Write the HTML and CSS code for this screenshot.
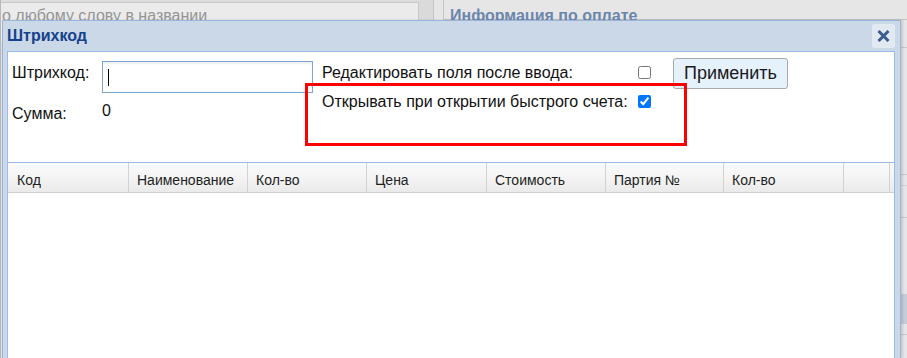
FILE: index.html
```html
<!DOCTYPE html>
<html lang="ru">
<head>
<meta charset="utf-8">
<title>Штрихкод</title>
<link rel="stylesheet" href="styles.css">
</head>
<body>
<div class="page">
  <div class="left-pane">
    <div class="search">о любому слову в названии</div>
  </div>
  <div class="gap"></div>
  <div class="right-pane">
    <h2 class="pay-title">Информация по оплате</h2>
    <div class="bg-row r1"></div>
    <div class="bg-row r2"></div>
    <div class="bg-row r3"></div>
    <div class="bg-row r4"></div>
    <div class="bg-row r5"></div>
    <div class="bg-row band"></div>
    <div class="bg-row r6"></div>
  </div>
</div>

<div class="dialog">
  <div class="dialog-header">
    <span class="dialog-title">Штрихкод</span>
    <button class="close-btn" type="button" aria-label="Закрыть">
      <svg width="13" height="12" viewBox="0 0 13 12"><path d="M1.5 1 L11.5 11 M11.5 1 L1.5 11" stroke="#3c5d8b" stroke-width="3" fill="none"/></svg>
    </button>
  </div>
  <div class="panel">
    <div class="form">
      <div class="fields">
        <label class="lbl first">Штрихкод:</label>
        <div class="input-wrap">
          <input class="barcode" type="text">
          <span class="caret"></span>
        </div>
        <span class="lbl second">Сумма:</span>
        <span class="value">0</span>
      </div>
      <div class="options">
        <span class="opt-lbl">Редактировать поля после ввода:</span>
        <input class="chk" type="checkbox">
        <span class="opt-lbl">Открывать при открытии быстрого счета:</span>
        <input class="chk" type="checkbox" checked>
      </div>
      <button class="apply" type="button">Применить</button>
    </div>
    <div class="grid-head">
      <div class="col c1">Код</div>
      <div class="col c2">Наименование</div>
      <div class="col c3">Кол-во</div>
      <div class="col c4">Цена</div>
      <div class="col c5">Стоимость</div>
      <div class="col c6">Партия №</div>
      <div class="col c7">Кол-во</div>
      <div class="col c8"></div>
      <div class="col-fill"></div>
    </div>
  </div>
</div>

<div class="highlight"></div>
</body>
</html>
```
FILE: styles.css
```css
html, body {
  margin: 0;
  padding: 0;
  width: 907px;
  height: 358px;
  overflow: hidden;
}
body {
  position: relative;
  font-family: "Liberation Sans", Arial, sans-serif;
  background: #e4e4e4;
  color: #111;
}

/* background page */
.page {
  display: flex;
  height: 358px;
}
.left-pane {
  width: 419px;
  background: #dddddd;
  border-left: 1px solid #b8b8b8;
  box-sizing: border-box;
}
.search {
  margin-top: 2px;
  height: 40px;
  box-sizing: border-box;
  border-top: 1px solid #c8c8c8;
  border-right: 1px solid #c8c8c8;
  background: #ebebeb;
  padding: 4px 0 0 1px;
  font-size: 16px;
  color: #959595;
  white-space: nowrap;
}
.gap {
  width: 14px;
  background: #dadada;
  border-right: 1px solid #c4c4c4;
}
.right-pane {
  flex: 1;
  background: #e6e6e6;
  padding-left: 9px;
}
.pay-title {
  margin: 0;
  padding: 13px 0 0 6px;
  height: 6px;
  line-height: 6px;
  font-size: 16px;
  font-weight: bold;
  color: #6b86ad;
  border-left: 1px solid #c4c4c4;
  border-bottom: 1px solid #c4c4c4;
  white-space: nowrap;
}
.bg-row { border-bottom: 1px solid #c9c9c9; }
.r1 { height: 27px; }
.r2 { height: 126px; }
.r3 { height: 10px; border-bottom-color: #d4d4d4; }
.r4 { height: 31px; }
.r5 { height: 76px; border-bottom: none; }
.band { height: 30px; background: #c6cdd9; border-bottom: none; }
.r6 { height: 10px; }

/* dialog */
.dialog {
  position: absolute;
  left: 2px;
  top: 20px;
  width: 899px;
  height: 338px;
  box-sizing: border-box;
  border: 1px solid #99b5dc;
  border-bottom: 0;
  background: #cbd8e8;
  padding: 0 5px 0 4px;
  display: flex;
  flex-direction: column;
  box-shadow: 2px 0 2px rgba(0, 0, 0, 0.12);
}
.dialog-header {
  height: 30px;
  display: flex;
  align-items: center;
  justify-content: space-between;
}
.dialog-title {
  font-size: 16px;
  font-weight: bold;
  line-height: 30px;
  color: #15428b;
}
.close-btn {
  width: 23px;
  height: 24px;
  padding: 0;
  border: none;
  border-radius: 3px;
  background: #e1e9f3;
  display: flex;
  align-items: center;
  justify-content: center;
}
.close-btn svg { display: block; }

.panel {
  flex: 1;
  border: 1px solid #99bbe8;
  border-bottom: 0;
  background: #fff;
}
.form {
  display: flex;
  align-items: flex-start;
  height: 110px;
  box-sizing: border-box;
  padding: 6px 0 0 4px;
}
.fields {
  display: grid;
  grid-template-columns: 90px 211px;
  row-gap: 9px;
  margin-top: 3px;
  font-size: 16px;
}
.lbl { padding-top: 3px; line-height: 18px; }
.value { line-height: 18px; }
.input-wrap {
  position: relative;
  width: 211px;
  height: 32px;
}
.barcode {
  width: 211px;
  height: 32px;
  box-sizing: border-box;
  margin: 0;
  border: 1px solid #7fa5d3;
  background: #fff;
  box-shadow: inset 0 2px 2px rgba(0, 0, 0, 0.06);
  outline: none;
}
.caret {
  position: absolute;
  left: 6px;
  top: 8px;
  width: 1px;
  height: 17px;
  background: #000;
}
.options {
  margin-left: 9px;
  padding-top: 6px;
  display: grid;
  grid-template-columns: 316px 13px;
  row-gap: 11px;
  align-items: start;
  font-size: 16px;
}
.opt-lbl { line-height: 18px; white-space: nowrap; }
.chk {
  width: 13px;
  height: 13px;
  margin: 2px 0 0 0;
}
.apply {
  margin-left: 22px;
  width: 115px;
  height: 31px;
  box-sizing: border-box;
  border: 1px solid #a9a9a9;
  border-radius: 3px;
  background: #e5f1fb;
  font-family: "Liberation Sans", Arial, sans-serif;
  font-size: 18px;
  color: #1a1a1a;
  padding: 0;
}

.grid-head {
  display: flex;
  border-top: 1px solid #99bbe8;
  border-bottom: 1px solid #d0d0d0;
  background: linear-gradient(to bottom, #fafafa 0%, #f5f5f5 45%, #eaeaea 100%);
}
.col {
  box-sizing: border-box;
  border-right: 1px solid #d2d2d2;
  padding: 9px 0 3px 9px;
  line-height: 17px;
  height: 29px;
  font-size: 14px;
  color: #1e1e1e;
  white-space: nowrap;
  overflow: hidden;
}
.c1 { width: 121px; }
.c2 { width: 119px; padding-left: 8px; }
.c3 { width: 119px; padding-left: 8px; }
.c4 { width: 120px; padding-left: 8px; }
.c5 { width: 119px; padding-left: 8px; }
.c6 { width: 118px; padding-left: 8px; }
.c7 { width: 120px; padding-left: 8px; }
.c8 { width: 46px; }
.col-fill { flex: 1; }

/* red annotation frame */
.highlight {
  position: absolute;
  left: 305px;
  top: 83px;
  width: 382px;
  height: 63px;
  box-sizing: border-box;
  border: 3px solid #ff0000;
}
```
